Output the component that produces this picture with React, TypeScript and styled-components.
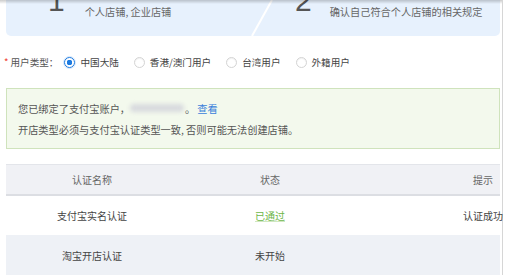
import * as React from "react";
import styled, { createGlobalStyle } from "styled-components";

const GlobalStyle = createGlobalStyle`
  body {
    margin: 0;
    background: #fff;
    font-family: "Noto Sans CJK SC", "Noto Sans", sans-serif;
  }
`;

const Shell = styled.div`
  position: relative;
  box-sizing: border-box;
  width: 503px;
  height: 275px;
  padding: 0 2px 0 6px;
  border-right: 1px solid #d6d6d6;
  &::before {
    content: "";
    position: absolute;
    top: 0;
    left: 0;
    right: 0;
    height: 4px;
    background: linear-gradient(rgba(0, 0, 0, 0.2), rgba(0, 0, 0, 0));
    z-index: 2;
  }
`;

const Banner = styled.div`
  display: flex;
  height: 36px;
  background: #e7f1fd;
  border-radius: 0 0 5px 5px;
  overflow: hidden;
`;

const Step = styled.div<{ $width?: number; $pad: number; $gap: number }>`
  display: flex;
  align-items: flex-start;
  gap: ${(p) => p.$gap}px;
  width: ${(p) => (p.$width ? `${p.$width}px` : "auto")};
  flex: ${(p) => (p.$width ? "none" : "1")};
  padding-left: ${(p) => p.$pad}px;
  box-sizing: border-box;
`;

const Digit = styled.span`
  font-family: "Liberation Sans", Arial, sans-serif;
  font-size: 30px;
  line-height: 30px;
  margin-top: -14px;
  color: #555;
`;

const StepText = styled.span`
  font-size: 10.2px;
  line-height: 14px;
  margin-top: 5px;
  color: #666;
  white-space: nowrap;
`;

const Divider = styled.svg`
  flex: none;
  display: block;
`;

const TypeRow = styled.div`
  display: flex;
  align-items: center;
  height: 20px;
  margin-top: 16px;
  font-size: 9.6px;
  color: #444;
`;

const Required = styled.span`
  color: #f04134;
  margin: 0 2px 0 -2px;
`;

const Label = styled.span`
  color: #555;
  margin-right: 6px;
`;

const Option = styled.label`
  display: flex;
  align-items: center;
  gap: 5px;
  margin-right: 15px;
  white-space: nowrap;
`;

const RadioDot = styled.span<{ $checked?: boolean }>`
  box-sizing: border-box;
  width: 11px;
  height: 11px;
  border-radius: 50%;
  border: ${(p) => (p.$checked ? "1.5px solid #1e7be0" : "1px solid #d4d4d4")};
  background: ${(p) =>
    p.$checked
      ? "radial-gradient(circle, #1e7be0 0 2.6px, #fff 3px)"
      : "#fff"};
  box-shadow: ${(p) =>
    p.$checked ? "0 0 0 1px #d6e7fb" : "inset 0 1px 1px rgba(0,0,0,0.06)"};
`;

const Notice = styled.div`
  margin-top: 16px;
  box-sizing: border-box;
  height: 61px;
  padding: 11px 11px;
  background: #f3f9ed;
  border: 1px solid #cfe3bc;
  font-size: 10.2px;
  color: #555;
  display: flex;
  flex-direction: column;
  gap: 5px;
`;

const NoticeLine = styled.div`
  display: flex;
  align-items: center;
  height: 16px;
  white-space: nowrap;
`;

const Redacted = styled.span`
  display: inline-block;
  width: 54px;
  height: 8px;
  margin: 0 1px 0 0;
  background: #d8dade;
  border-radius: 4px;
  filter: blur(2px);
`;

const Link = styled.a`
  color: #3a7fdb;
  text-decoration: none;
  margin-left: 2px;
`;

const Table = styled.div`
  margin-top: 15px;
  font-size: 10px;
`;

const Row = styled.div<{ $bg: string; $height: number; $head?: boolean }>`
  display: grid;
  grid-template-columns: 172px 184px 1fr;
  align-items: center;
  height: ${(p) => p.$height}px;
  box-sizing: border-box;
  background: ${(p) => p.$bg};
  border-top: ${(p) => (p.$head ? "1px solid #e3e5ea" : "none")};
  border-bottom: ${(p) => (p.$head ? "2px solid #dcdee3" : "none")};
  color: ${(p) => (p.$head ? "#666" : "#444")};
`;

const Cell = styled.div`
  text-align: center;
  white-space: nowrap;
`;

const HintCell = styled.div`
  display: flex;
  justify-content: flex-end;
`;

const Hint = styled.span`
  display: flex;
  justify-content: center;
  width: 34px;
  white-space: nowrap;
`;

const Passed = styled.span`
  color: #6cb648;
  text-decoration: underline;
  text-decoration-color: #cfe7c0;
`;

const options = ["中国大陆", "香港/澳门用户", "台湾用户", "外籍用户"];

const rows = [
  { name: "支付宝实名认证", status: "已通过", hint: "认证成功", bg: "#fff" },
  { name: "淘宝开店认证", status: "未开始", hint: "", bg: "#eef1f6" },
];

export default function App() {
  return (
    <>
      <GlobalStyle />
      <Shell>
        <Banner>
          <Step $width={245} $pad={42} $gap={20}>
            <Digit>1</Digit>
            <StepText>个人店铺, 企业店铺</StepText>
          </Step>
          <Divider width="22" height="36" viewBox="0 0 22 36">
            <line x1="21" y1="0" x2="1" y2="36" stroke="#fff" strokeWidth="2" />
          </Divider>
          <Step $pad={22} $gap={18}>
            <Digit>2</Digit>
            <StepText>确认自己符合个人店铺的相关规定</StepText>
          </Step>
        </Banner>

        <TypeRow>
          <Required>*</Required>
          <Label>用户类型：</Label>
          {options.map((o, i) => (
            <Option key={o}>
              <RadioDot $checked={i === 0} />
              {o}
            </Option>
          ))}
        </TypeRow>

        <Notice>
          <NoticeLine>
            您已绑定了支付宝账户，
            <Redacted />。<Link>查看</Link>
          </NoticeLine>
          <NoticeLine>开店类型必须与支付宝认证类型一致, 否则可能无法创建店铺。</NoticeLine>
        </Notice>

        <Table>
          <Row $bg="#f0f1f5" $height={32} $head>
            <Cell>认证名称</Cell>
            <Cell>状态</Cell>
            <HintCell>
              <Hint>提示</Hint>
            </HintCell>
          </Row>
          {rows.map((r) => (
            <Row key={r.name} $bg={r.bg} $height={r.bg === "#fff" ? 39 : 40}>
              <Cell>{r.name}</Cell>
              <Cell>{r.status === "已通过" ? <Passed>{r.status}</Passed> : r.status}</Cell>
              <HintCell>
                <Hint>{r.hint}</Hint>
              </HintCell>
            </Row>
          ))}
        </Table>
      </Shell>
    </>
  );
}
